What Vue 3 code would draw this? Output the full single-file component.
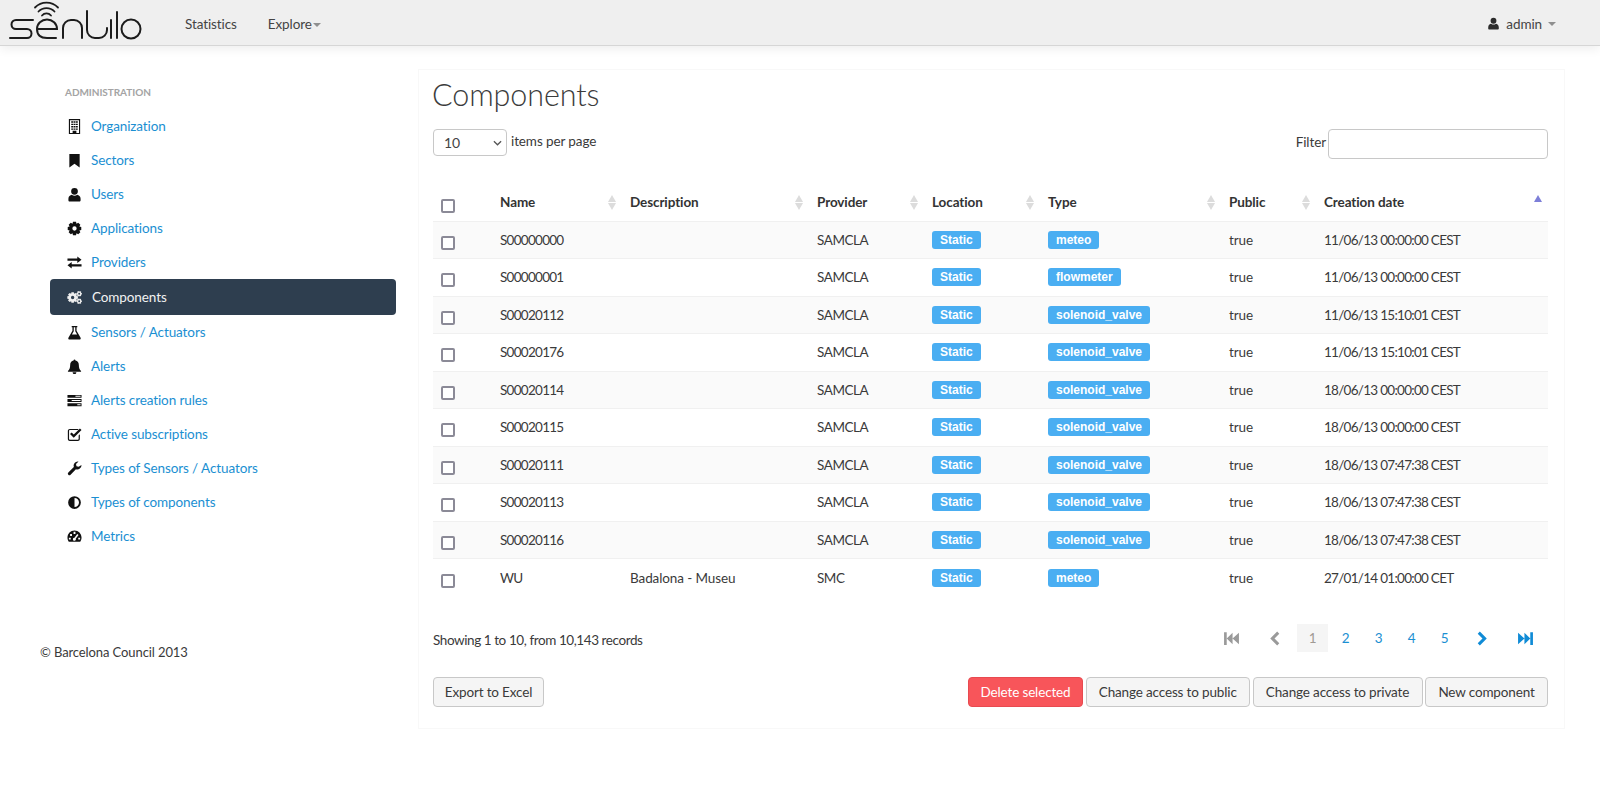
<template>
  <div class="page">
    <header class="nav">
      <svg class="logo" width="146" height="42" viewBox="0 0 146 42" fill="none" stroke="#1c1c1c" stroke-width="2" stroke-linecap="round">
        <path d="M33 20H16a4.500 4.500 0 0 0 0 9h11a4.500 4.500 0 0 1 0 9H10" />
        <path d="M37 29h20a10 9.500 0 0 0-20 0c0 6 4 9 10 9h9" />
        <path d="M63 38V28a8 8 0 0 1 8-8h3a8 8 0 0 1 8 8v10" />
        <path d="M87 11v19a8 8 0 0 0 8 8h4a8 8 0 0 0 8-8v-2" />
        <path d="M111 20v18M117 12v26" />
        <circle cx="131" cy="29" r="9.500" />
        <path d="M42 15.500a6 6 0 0 1 9 0M38.500 11.500a11 11 0 0 1 16 0M35 7.500a16 16 0 0 1 23 0" stroke-width="1.800" />
      </svg>
      <a class="nav-link stats">Statistics</a>
      <a class="nav-link">Explore<i class="caret"></i></a>
      <div class="user">
        <svg class="ico" viewBox="0 0 16 16"><path :d="paths.user" /></svg>
        <span>admin</span><i class="caret"></i>
      </div>
    </header>

    <div class="layout">
      <aside class="side">
        <div class="side-head">ADMINISTRATION</div>
        <ul class="menu">
          <li v-for="m in menu" :key="m.label" :class="{ on: m.label === 'Components' }">
            <svg class="ico" viewBox="0 0 16 16"><path :d="paths[m.icon]" fill-rule="evenodd" /></svg>
            <a>{{ m.label }}</a>
          </li>
        </ul>
        <p class="copy">© Barcelona Council 2013</p>
      </aside>

      <main class="panel">
        <h1>Components</h1>
        <div class="tools">
          <div class="per">
            <div class="sel">
              <select><option>10</option></select>
              <svg viewBox="0 0 10 6" width="9" height="6" fill="none" stroke="#555" stroke-width="1.400"><path d="M1 1l4 4 4-4" /></svg>
            </div>
            <span>items per page</span>
          </div>
          <label class="filter"><span>Filter</span> <input type="text" /></label>
        </div>

        <table>
          <colgroup>
            <col v-for="w in widths" :key="w" :style="{ width: w + 'px' }" />
          </colgroup>
          <thead>
            <tr>
              <th class="chk"><input type="checkbox" /></th>
              <th v-for="h in heads" :key="h">{{ h }}<i class="sort" :class="{ up: h === 'Creation date' }"></i></th>
            </tr>
          </thead>
          <tbody>
            <tr v-for="r in rows" :key="r.name">
              <td class="chk"><input type="checkbox" /></td>
              <td class="num">{{ r.name }}</td>
              <td>{{ r.desc }}</td>
              <td class="prov">{{ r.prov }}</td>
              <td><span class="badge">Static</span></td>
              <td><span class="badge">{{ r.type }}</span></td>
              <td>true</td>
              <td class="num">{{ r.date }}</td>
            </tr>
          </tbody>
        </table>

        <div class="foot">
          <span class="count">Showing 1 to 10, from 10,143 records</span>
          <div class="pager">
            <a class="off ar"><svg viewBox="0 0 16 16"><path :d="paths.first" /></svg></a>
            <a class="off ar"><svg viewBox="0 0 16 16"><path :d="paths.prev" /></svg></a>
            <a class="cur">1</a>
            <a v-for="n in [2, 3, 4, 5]" :key="n">{{ n }}</a>
            <a class="ar"><svg viewBox="0 0 16 16"><path :d="paths.next" /></svg></a>
            <a class="ar"><svg viewBox="0 0 16 16"><path :d="paths.last" /></svg></a>
          </div>
        </div>

        <div class="actions">
          <button class="b-export">Export to Excel</button>
          <div class="right">
            <button class="danger">Delete selected</button>
            <button class="b-public">Change access to public</button>
            <button class="b-private">Change access to private</button>
            <button class="b-new">New component</button>
          </div>
        </div>
      </main>
    </div>
  </div>
</template>

<script setup>
// gear outline, used for the cog and cogs menu icons
const gear = (cx, cy, ro, ri, hole, teeth) => {
  let d = ''
  const step = (Math.PI * 2) / teeth
  for (let i = 0; i < teeth; i++) {
    const a = i * step
    const pts = [[ri, -0.5], [ro, -0.28], [ro, 0.28], [ri, 0.5]]
    pts.forEach(([r, k], j) => {
      const t = a + k * step
      d += `${i === 0 && j === 0 ? 'M' : 'L'}${(cx + r * Math.cos(t)).toFixed(2)} ${(cy + r * Math.sin(t)).toFixed(2)}`
    })
  }
  d += `zM${cx - hole} ${cy}a${hole} ${hole} 0 1 0 ${hole * 2} 0a${hole} ${hole} 0 1 0 ${-hole * 2} 0z`
  return d
}

// windows of the outlined building icon
let windows = ''
for (const y of [2.5, 5, 7.5, 10]) {
  for (const x of [4.5, 7, 9.5]) windows += `M${x} ${y}h2v1.500h-2z`
}

const paths = {
  building: 'M2 0h12v16H2zM3.200 1.200v13.600h9.600V1.200z' + windows + 'M6 12.500h4v2.300H6z',
  bookmark: 'M2.500 1h11v14.500L8 11.500l-5.500 4z',
  user: 'M8 1a3.600 3.600 0 1 1 0 7.200A3.600 3.600 0 0 1 8 1zM1.500 14.200v-1.700C1.500 9.800 3.500 8.500 5 8.200 6 9 7 9.300 8 9.300s2-.3 3-1.100c1.500.3 3.500 1.600 3.500 4.300v1.700c0 .8-.6 1.300-1.300 1.300H2.800c-.7 0-1.300-.5-1.300-1.300z',
  cog: gear(8, 8, 7.400, 5.600, 2.300, 8),
  exchange: 'M.5 3.800h10.500V1.500L15.500 5 11 8.500V6.200H.5zM15.500 9.800H5V7.500L.5 11 5 14.500v-2.300h10.500z',
  cogs: gear(6, 8, 5.800, 4.200, 1.800, 8) + gear(13, 4, 3, 2.100, 1, 6) + gear(13, 12, 3, 2.100, 1, 6),
  flask: 'M5 1h6v1.300h-.8v3.900l4.300 7.300c.5 1-.2 1.900-1.100 1.900H2.600c-.9 0-1.600-.9-1.100-1.900l4.300-7.300V2.300H5zM7.200 2.300v4.300L5.200 10h5.600L8.800 6.600V2.300z',
  bell: 'M8 .5c.6 0 1 .4 1 1 2.400.4 3.600 2.400 3.600 4.700 0 3.800 1 5.300 2.400 6.500v.8H1v-.8c1.400-1.200 2.400-2.700 2.400-6.500 0-2.300 1.200-4.300 3.600-4.700 0-.6.4-1 1-1zM6 14.200h4a2 2 0 0 1-4 0z',
  tasks: 'M.5 2h15v3H.5zM9 3v1h5.500V3zM.5 6.500h15v3H.5zM5 7.500v1h9.500v-1zM.5 11h15v3H.5zM11 12v1h3.500v-1z',
  check: 'M3 2h9v1.300H3c-.5 0-.8.3-.8.8v8.600c0 .5.3.8.8.8h8.600c.5 0 .8-.3.8-.8V9l1.300-1.300v5c0 1.200-.9 2.100-2.100 2.100H3c-1.200 0-2.100-.9-2.100-2.100V4.100C.9 2.900 1.800 2 3 2zM13.800 1.500l1.700 1.700-8.300 8.300-4-4L4.900 5.800l2.300 2.300z',
  wrench: 'M15.500 4.300a4.500 4.500 0 0 1-6 4.400L3.800 14.600a1.600 1.600 0 0 1-2.400 0 1.700 1.700 0 0 1 0-2.400l5.900-5.700A4.500 4.500 0 0 1 12.300.5L9.600 3.200l.5 2.300 2.300.6z',
  adjust: 'M8 1.200a6.800 6.800 0 1 0 0 13.600A6.800 6.800 0 0 0 8 1.200zM8 3.200a4.800 4.800 0 0 1 0 9.600z',
  dash: 'M8 1.500c4.200 0 7.500 3.400 7.500 7.600 0 1.700-.5 3.200-1.400 4.400H1.900C1 12.300.5 10.800.5 9.100.5 4.900 3.800 1.500 8 1.500zM7 3v2.400h2V3zM3.300 5.400v2h2v-2zM10.900 5.400l-2.900 4a1.600 1.600 0 1 0 1.300.9l3-4zM2 9.200v2h2v-2zM12 9.200v2h2v-2z',
  first: 'M1 2h2.500v12H1zM3.500 8L9 2.500v11zM9 8l6-5.500v11z',
  last: 'M15 2h-2.500v12H15zM12.500 8L7 2.500v11zM7 8L1 2.500v11z',
  prev: 'M10.500 1.500l2 2L8 8l4.500 4.500-2 2L4 8z',
  next: 'M5.500 1.500l-2 2L8 8l-4.500 4.500 2 2L12 8z'
}

const menu = [
  { label: 'Organization', icon: 'building' },
  { label: 'Sectors', icon: 'bookmark' },
  { label: 'Users', icon: 'user' },
  { label: 'Applications', icon: 'cog' },
  { label: 'Providers', icon: 'exchange' },
  { label: 'Components', icon: 'cogs' },
  { label: 'Sensors / Actuators', icon: 'flask' },
  { label: 'Alerts', icon: 'bell' },
  { label: 'Alerts creation rules', icon: 'tasks' },
  { label: 'Active subscriptions', icon: 'check' },
  { label: 'Types of Sensors / Actuators', icon: 'wrench' },
  { label: 'Types of components', icon: 'adjust' },
  { label: 'Metrics', icon: 'dash' }
]

const widths = [57, 130, 187, 115, 116, 181, 95, 234]
const heads = ['Name', 'Description', 'Provider', 'Location', 'Type', 'Public', 'Creation date']

const rows = [
  { name: 'S00000000', desc: '', prov: 'SAMCLA', type: 'meteo', date: '11/06/13 00:00:00 CEST' },
  { name: 'S00000001', desc: '', prov: 'SAMCLA', type: 'flowmeter', date: '11/06/13 00:00:00 CEST' },
  { name: 'S00020112', desc: '', prov: 'SAMCLA', type: 'solenoid_valve', date: '11/06/13 15:10:01 CEST' },
  { name: 'S00020176', desc: '', prov: 'SAMCLA', type: 'solenoid_valve', date: '11/06/13 15:10:01 CEST' },
  { name: 'S00020114', desc: '', prov: 'SAMCLA', type: 'solenoid_valve', date: '18/06/13 00:00:00 CEST' },
  { name: 'S00020115', desc: '', prov: 'SAMCLA', type: 'solenoid_valve', date: '18/06/13 00:00:00 CEST' },
  { name: 'S00020111', desc: '', prov: 'SAMCLA', type: 'solenoid_valve', date: '18/06/13 07:47:38 CEST' },
  { name: 'S00020113', desc: '', prov: 'SAMCLA', type: 'solenoid_valve', date: '18/06/13 07:47:38 CEST' },
  { name: 'S00020116', desc: '', prov: 'SAMCLA', type: 'solenoid_valve', date: '18/06/13 07:47:38 CEST' },
  { name: 'WU', desc: 'Badalona - Museu', prov: 'SMC', type: 'meteo', date: '27/01/14 01:00:00 CET' }
]
</script>

<style>
html, body { margin: 0; background: #fff; }
</style>

<style scoped>
.page { font-family: Lato, "Noto Sans", sans-serif; font-size: 13.5px; letter-spacing: -0.1px; color: #3a3a3a; height: 800px; overflow: hidden; }
.nav { height: 43px; background: #efefef; border-bottom: 1px solid #d6d6d6; box-shadow: 0 3px 10px rgba(0, 0, 0, 0.07); display: flex; align-items: center; padding: 2px 44px 0 0; box-sizing: content-box; position: relative; }
.logo { margin-right: 39px; flex: none; align-self: flex-start; margin-top: -2px; }
.nav-link { color: #444; margin-right: 31px; }
.caret { display: inline-block; width: 0; height: 0; border: 4px solid transparent; border-top: 4px solid #8f8f8f; border-bottom: 0; vertical-align: middle; margin-left: 1px; }
.user { margin-left: auto; display: flex; align-items: center; gap: 6px; color: #444; }
.user span { margin-right: -2px; }
.user .caret { margin-left: 2px; }
.ico { width: 15px; height: 15px; fill: #111; flex: none; }
.user .ico { fill: #2c2c2c; width: 13px; height: 13px; }

.layout { display: flex; align-items: flex-start; }
.side { width: 378px; padding-left: 40px; flex: none; height: 680px; }
.side-head { font-size: 10px; font-weight: 700; color: #a4a4a4; margin: 40px 0 0 25px; line-height: 12px; letter-spacing: -0.05px; }
.menu { list-style: none; margin: 11px 22px 0 10px; padding: 0; }
.menu li { height: 34px; display: flex; align-items: center; padding-left: 17px; gap: 9px; box-sizing: border-box; }
.menu a { color: #1b8fd2; }
.menu li.on { height: 36px; background: #2e3e4f; border-radius: 4px; }
.menu li.on .ico { fill: #eee; }
.menu li.on a { color: #f2f2f2; margin-left: 1px; }
.copy { margin: 91px 0 0; font-size: 13px; line-height: 16px; }

.panel { width: 1147px; height: 660px; margin-top: 23px; border: 1px solid #f8f8f8; box-sizing: border-box; padding: 0 16px 0 14px; }
h1 { margin: 0 0 0 -1px; font-size: 30.5px; font-weight: 300; color: #3c3c3c; line-height: 46px; padding-top: 1px; }
.tools { display: flex; justify-content: space-between; align-items: flex-start; margin-top: 12px; height: 56px; }
.per { display: flex; gap: 4px; }
.per span { line-height: 24px; }
.sel { position: relative; width: 74px; height: 27px; }
.sel svg { position: absolute; right: 5px; top: 11px; }
select { appearance: none; display: block; width: 74px; height: 27px; border: 1px solid #c8c8c8; border-radius: 4px; background: #fff; color: #444; font: inherit; font-size: 14px; padding-left: 10px; }
.filter { display: flex; gap: 2px; align-items: center; line-height: 30px; }
.filter span { margin-top: -4px; }
input[type="text"] { width: 220px; height: 30px; box-sizing: border-box; border: 1px solid #c8c8c8; border-radius: 4px; background: #fff; }

table { width: 1115px; table-layout: fixed; border-collapse: collapse; }
th { position: relative; height: 36px; text-align: left; padding: 0 10px 1px; font-weight: 700; color: #333; border-bottom: 1px solid #f0f0f0; box-sizing: border-box; }
td { height: 37.5px; padding: 0 10px; border-bottom: 1px solid #f0f0f0; box-sizing: border-box; }
td.num { letter-spacing: -0.72px; }
td.prov { letter-spacing: -0.45px; }
tbody tr:last-child td { border-bottom: 0; }
tbody tr:nth-child(odd) { background: #fafafa; }
.chk { padding: 6px 0 0 8px; }
input[type="checkbox"] { appearance: none; display: block; width: 14px; height: 14px; margin: 0; border: 2px solid #8b8a97; border-radius: 2px; box-sizing: border-box; background: #fff; }
.sort { position: absolute; right: 4px; top: 10px; width: 0; height: 0; border: 4px solid transparent; border-bottom: 7px solid #dcdcdc; border-top: 0; }
.sort::after { content: ""; position: absolute; left: -4px; top: 8px; width: 0; height: 0; border: 4px solid transparent; border-top: 7px solid #dcdcdc; border-bottom: 0; }
.sort.up { border-bottom-color: #7d7fd8; right: 6px; }
.sort.up::after { display: none; }
.badge { display: inline-block; background: #4aaef2; color: #fff; font-family: "Liberation Sans", Arial, sans-serif; font-weight: 700; font-size: 12px; letter-spacing: 0; line-height: 18px; padding: 0 8px; border-radius: 3px; }

.foot { display: flex; justify-content: space-between; align-items: center; margin-top: 28px; height: 28px; }
.count { padding-top: 4px; letter-spacing: -0.42px; }
.pager { display: flex; align-items: center; padding-right: 1px; }
.pager a { width: 33px; height: 28px; display: flex; align-items: center; justify-content: center; color: #1b8fd2; }
.pager .cur { background: #f5f5f5; color: #a09a94; width: 31px; margin: 0 1px; }
.pager .ar { width: 43px; }
.pager svg { width: 17px; height: 17px; fill: #0f8bd6; }
.pager .off svg { fill: #9a9a9a; }
.actions { display: flex; justify-content: space-between; margin-top: 25px; }
.right { display: flex; gap: 2.5px; }
button { height: 30px; padding: 0; font: inherit; letter-spacing: -0.15px; color: #3a3a3a; background: #f5f5f5; border: 1px solid #c8c8c8; border-radius: 4px; }
button.danger { width: 115px; background: #f8555a; border-color: #e84a50; color: #fff; }
.b-export { width: 111px; }
.b-public { width: 164.5px; }
.b-private { width: 170px; }
.b-new { width: 123px; }
</style>
